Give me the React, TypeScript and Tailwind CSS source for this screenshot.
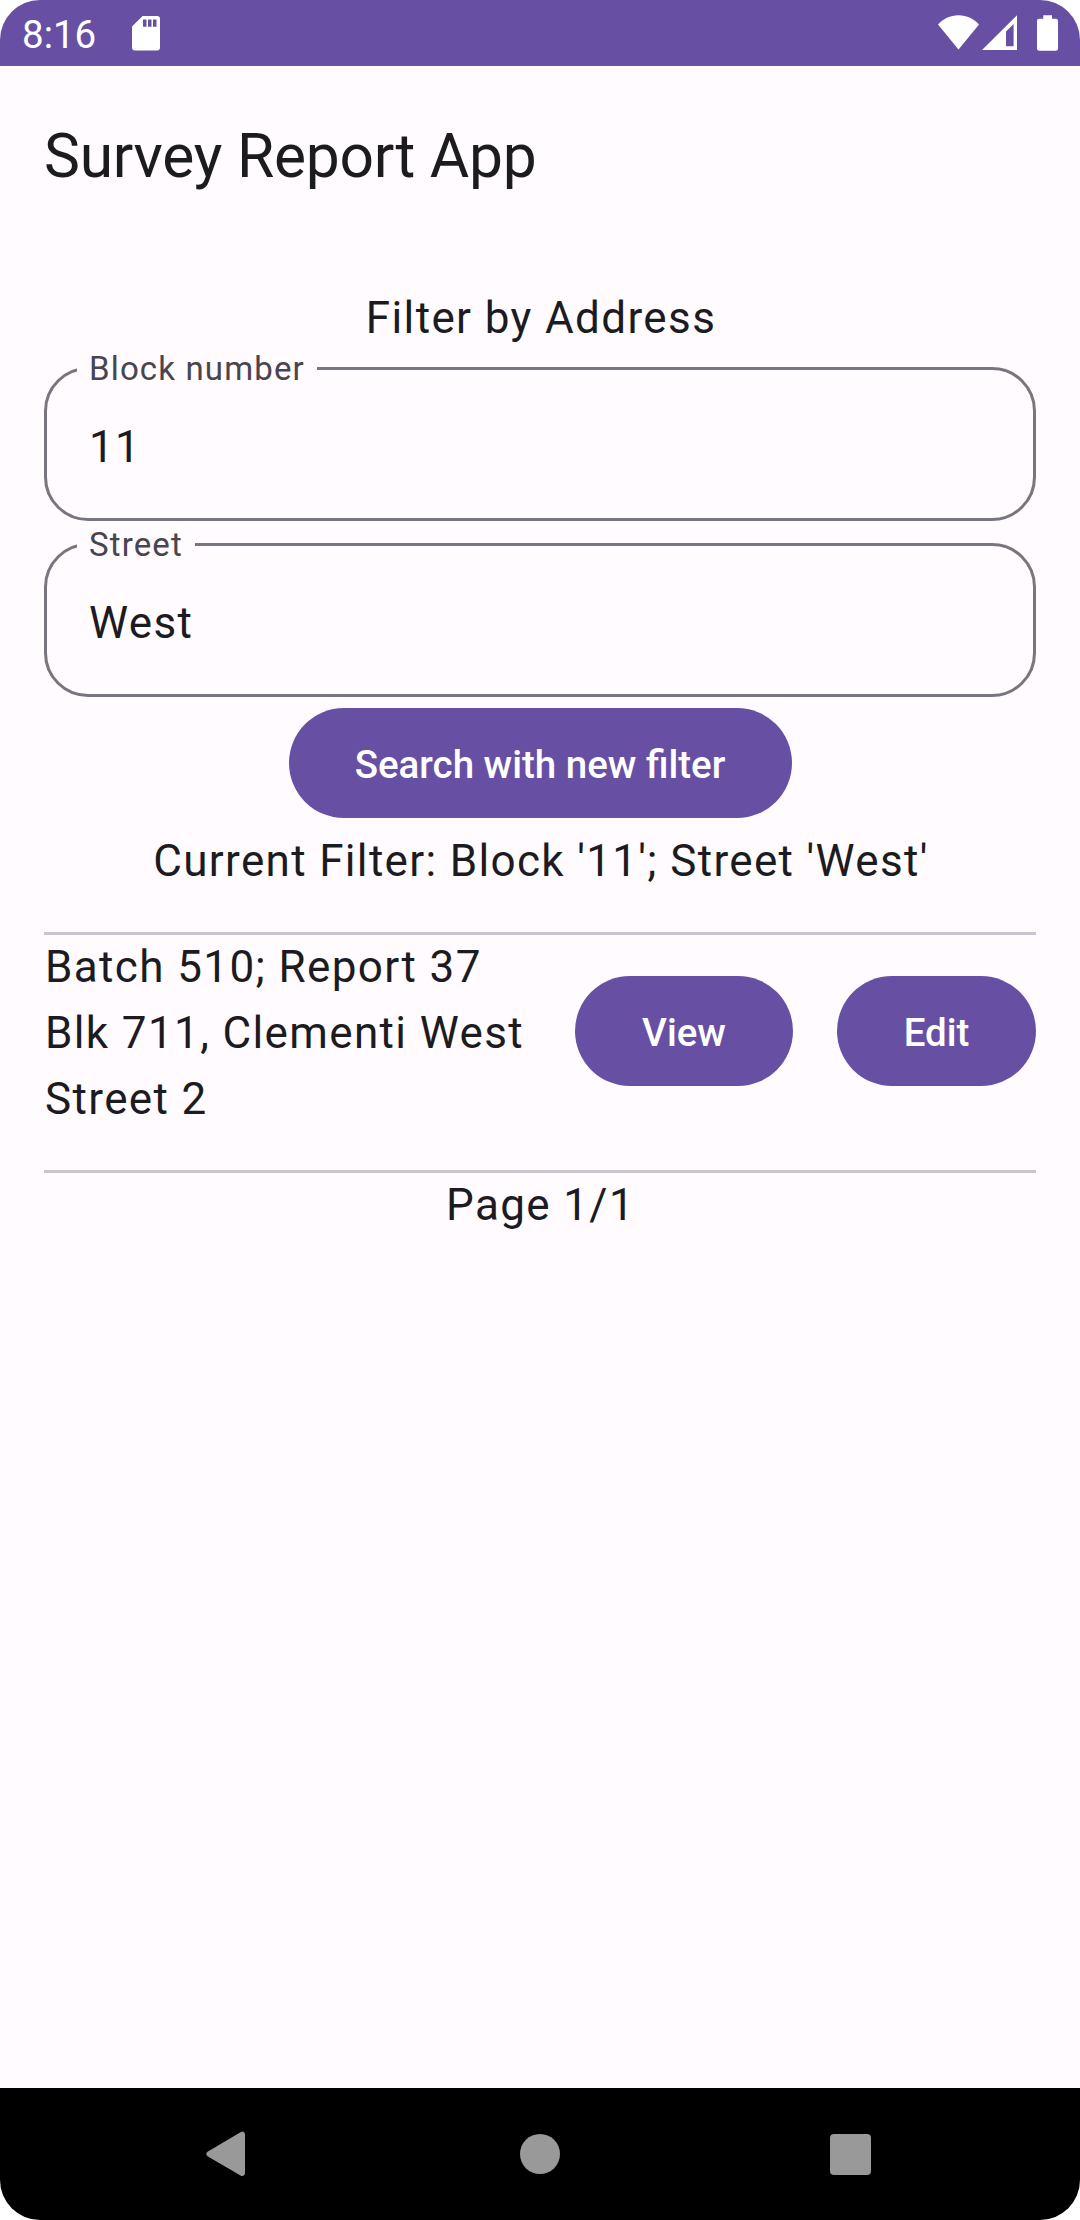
import type { ReactNode } from 'react';

function StatusBar() {
  return (
    <header className="flex h-[66px] items-center bg-[#6750a4] pl-[22px] text-white">
      <span className="mt-[3px] w-[75px] text-[38.5px] leading-[39px] tracking-normal">8:16</span>
      <svg className="ml-[35px] h-[66px] w-7" viewBox="0 0 28 66" fill="currentColor">
        <path
          fillRule="evenodd"
          d="M10.6 16H25a3 3 0 0 1 3 3v28.5a3 3 0 0 1-3 3H3a3 3 0 0 1-3-3V26.5zM11 19.5v7.3h3.5v-7.3zM16 19.5v7.3h3.5v-7.3zM21 19.5v7.3h3.5v-7.3z"
        />
      </svg>
      <svg className="ml-auto mr-[21px] h-[66px] w-[121px]" viewBox="938 0 121 66" fill="currentColor">
        <path d="M938 24.5C943 19 950 15.2 958.5 15.2S974 19 979 24.5L958.5 49.5z" />
        <path fillRule="evenodd" d="M1017 15.2V50H982zM1013.6 24L1006 31.5V46.3H1013.6z" />
        <path d="M1043.3 15.2h8.7v3.6h3.8a2.2 2.2 0 0 1 2.2 2.2v27.6a2.2 2.2 0 0 1-2.2 2.2h-16.6a2.2 2.2 0 0 1-2.2-2.2V21a2.2 2.2 0 0 1 2.2-2.2h4.1z" />
      </svg>
    </header>
  );
}

function Field({ label, value }: { label: string; value: string }) {
  return (
    <div className="relative flex h-[154px] w-full items-center rounded-[44px] border-3 border-[#79747e] pt-[6px] pl-[42px]">
      <span className="absolute -top-[20px] left-[30px] bg-[#fffbfe] pr-[12px] pl-[12px] text-[33px] leading-[37px] tracking-[1.15px] text-[#49454f]">
        {label}
      </span>
      <span className="leading-[66px]">{value}</span>
    </div>
  );
}

function PillButton({ className, children }: { className: string; children: ReactNode }) {
  return (
    <button
      className={`flex h-[110px] shrink-0 items-center justify-center rounded-full bg-[#6750a4] pt-[3px] text-[38.5px] font-medium tracking-normal text-white ${className}`}
    >
      {children}
    </button>
  );
}

function NavBar() {
  return (
    <nav className="flex h-[132px] items-center bg-black pl-[206px] text-[#999999]">
      <svg className="h-[46px] w-10" viewBox="0 0 40 46" fill="currentColor">
        <path d="M1.5 20.8L34.5 1.2Q36.5 0 38 1.2Q39 2 39 3.5V42Q39 43.8 37.8 44.5Q36.5 45.5 34.5 44.4L1.5 25.2Q-1 23 1.5 20.8z" />
      </svg>
      <div className="ml-[274px] size-10 rounded-full bg-[#999999]" />
      <div className="ml-[270px] size-[41px] rounded-[4px] bg-[#999999]" />
    </nav>
  );
}

export default function App() {
  return (
    <div className="h-[2220px] w-[1080px] bg-white font-['Roboto',sans-serif]">
      <div className="flex h-full flex-col overflow-hidden rounded-[40px] bg-[#fffbfe] text-[44px] leading-[66px] tracking-[1.375px] text-[#1c1b1f]">
        <StatusBar />
        <h1 className="flex h-44 items-center px-11 pt-[5px] text-[60.5px] leading-[77px] tracking-[-0.24px]">
          Survey Report App
        </h1>
        <main className="flex grow flex-col items-center px-11 pt-[43px]">
          <h2 className="pl-[2px]">Filter by Address</h2>
          <div className="mt-[16px] flex w-full flex-col gap-[22px]">
            <Field label="Block number" value="11" />
            <Field label="Street" value="West" />
          </div>
          <PillButton className="mt-[11px] w-[503px]">Search with new filter</PillButton>
          <p className="mt-[10px] pl-[2px] tracking-[1.33px]">
            Current Filter: Block '11'; Street 'West'
          </p>
          <div className="mt-[38px] flex h-[241px] w-full items-start border-y-3 border-[#cac4d0]">
            <div className="-mt-px w-[531px] pl-[1px]">
              <p>Batch 510; Report 37</p>
              <p className="w-[500px]">Blk 711, Clementi West Street 2</p>
            </div>
            <div className="mt-[41px] flex gap-11">
              <PillButton className="w-[218px]">View</PillButton>
              <PillButton className="w-[199px]">Edit</PillButton>
            </div>
          </div>
          <p className="-mt-px pl-[1px]">Page 1/1</p>
        </main>
        <NavBar />
      </div>
    </div>
  );
}
